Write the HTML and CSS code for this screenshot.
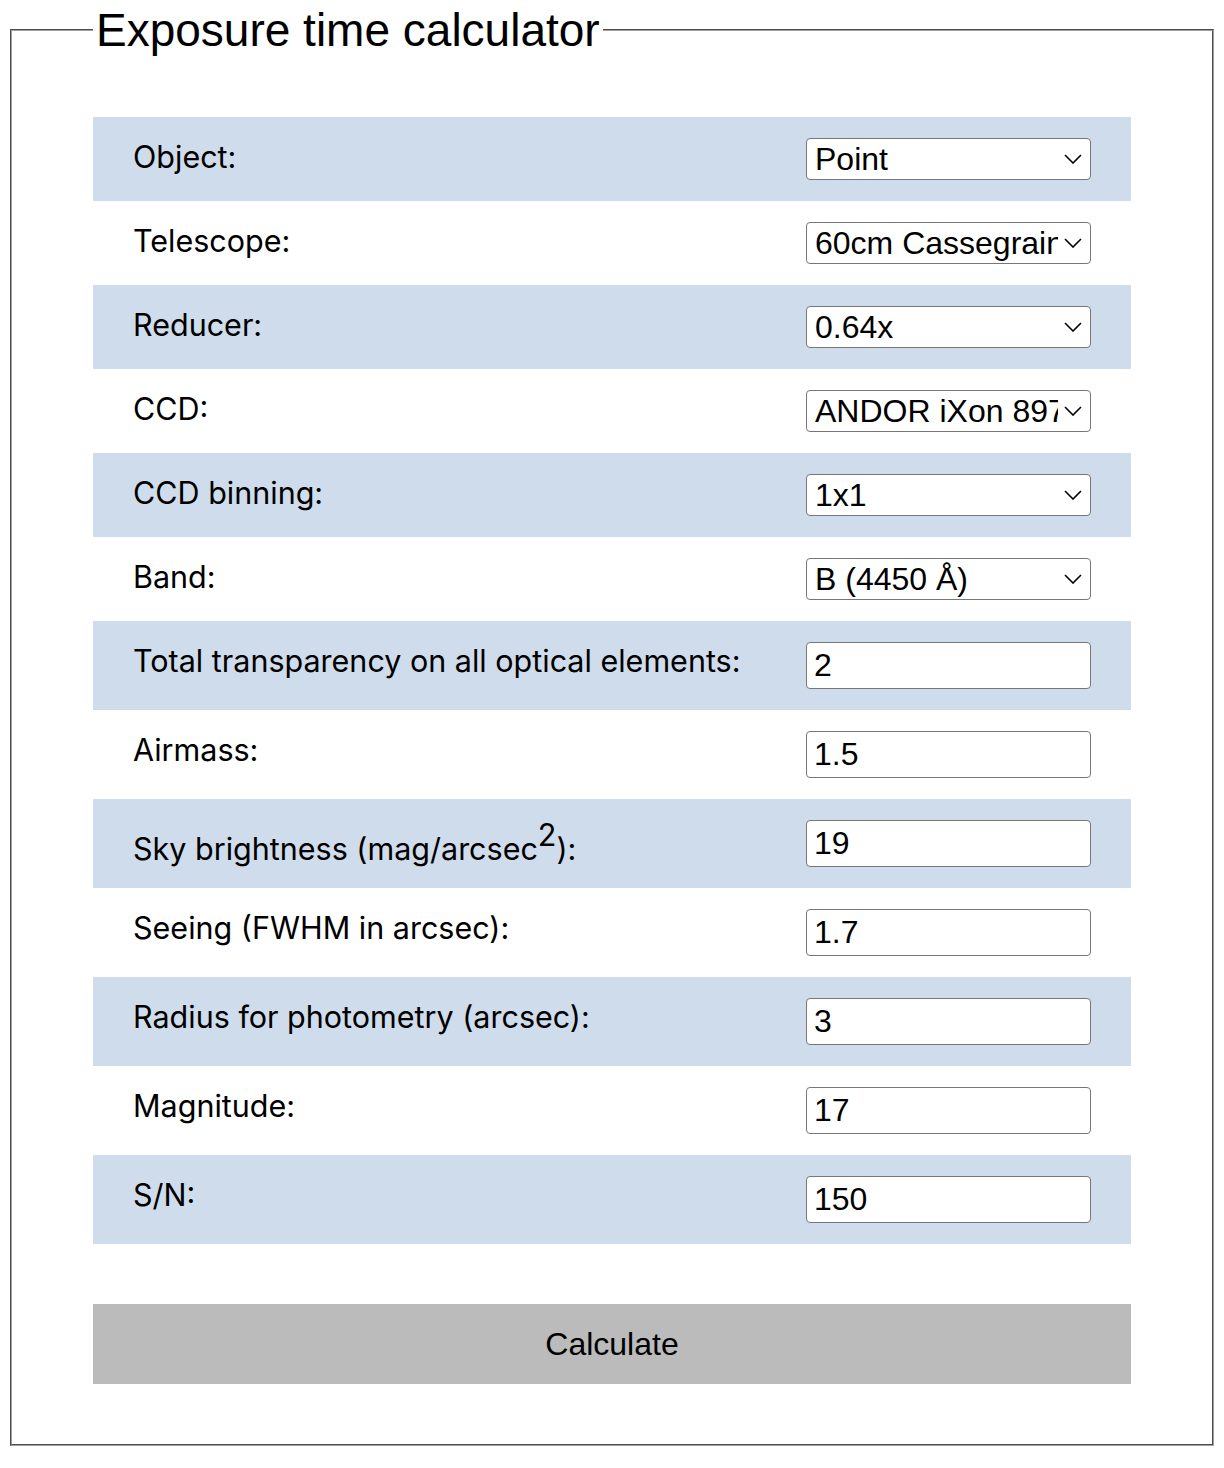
FILE: index.html
```html
<!DOCTYPE html>
<html lang="en">
<head>
<meta charset="utf-8">
<title>Exposure time calculator</title>
<link rel="stylesheet" href="styles.css">
</head>
<body>
<form class="calc">
  <fieldset class="box">
    <legend class="title">Exposure time calculator</legend>
    <table class="grid">
      <tr class="alt">
        <td class="lbl">Object:</td>
        <td class="ctl"><select class="sel"><option>Point</option><option>Extended</option></select></td>
      </tr>
      <tr>
        <td class="lbl">Telescope:</td>
        <td class="ctl"><select class="sel"><option>60cm Cassegrain</option></select></td>
      </tr>
      <tr class="alt">
        <td class="lbl">Reducer:</td>
        <td class="ctl"><select class="sel"><option>0.64x</option></select></td>
      </tr>
      <tr>
        <td class="lbl">CCD:</td>
        <td class="ctl"><select class="sel"><option>ANDOR iXon 897</option></select></td>
      </tr>
      <tr class="alt">
        <td class="lbl">CCD binning:</td>
        <td class="ctl"><select class="sel"><option>1x1</option></select></td>
      </tr>
      <tr>
        <td class="lbl">Band:</td>
        <td class="ctl"><select class="sel"><option>B (4450 Å)</option></select></td>
      </tr>
      <tr class="alt">
        <td class="lbl">Total transparency on all optical elements:</td>
        <td class="ctl"><input class="inp" type="text" value="2"></td>
      </tr>
      <tr>
        <td class="lbl">Airmass:</td>
        <td class="ctl"><input class="inp" type="text" value="1.5"></td>
      </tr>
      <tr class="alt">
        <td class="lbl">Sky brightness (mag/arcsec<sup class="sup">2</sup>):</td>
        <td class="ctl"><input class="inp" type="text" value="19"></td>
      </tr>
      <tr>
        <td class="lbl">Seeing (FWHM in arcsec):</td>
        <td class="ctl"><input class="inp" type="text" value="1.7"></td>
      </tr>
      <tr class="alt">
        <td class="lbl">Radius for photometry (arcsec):</td>
        <td class="ctl"><input class="inp" type="text" value="3"></td>
      </tr>
      <tr>
        <td class="lbl">Magnitude:</td>
        <td class="ctl"><input class="inp" type="text" value="17"></td>
      </tr>
      <tr class="alt">
        <td class="lbl">S/N:</td>
        <td class="ctl"><input class="inp" type="text" value="150"></td>
      </tr>
    </table>
    <button class="go" type="button">Calculate</button>
  </fieldset>
</form>
</body>
</html>
```

FILE: styles.css
```css
html, body {
  background: #ffffff;
}
body {
  margin: 3px 8px 8px 8px;
  font-family: "Liberation Sans", Arial, sans-serif;
  color: #000;
}
.calc {
  margin: 0;
}
.box {
  margin: 0 2px;
  padding: 60px 81px 60px 81px;
  border: 2px groove #a0a0a0;
  min-width: 0;
}
.title {
  font-family: "Liberation Sans", Arial, sans-serif;
  font-size: 46px;
  padding: 0 3px;
  margin-left: 0;
}
.grid {
  width: 100%;
  table-layout: fixed;
  border-collapse: collapse;
  border-spacing: 0;
}
.alt {
  background: #cfdceb;
}
.lbl {
  font-family: Inter, "Liberation Sans", sans-serif;
  font-size: 30.5px;
  white-space: nowrap;
  overflow: visible;
  vertical-align: top;
  padding: 21px 10px 21px 40px;
  line-height: normal;
}
.sup {
  font-size: 1em;
  line-height: 1;
  vertical-align: 14px;
}
.ctl {
  width: 285px;
  vertical-align: top;
  padding: 21px 40px 21px 40px;
}
.sel {
  -webkit-appearance: none;
  appearance: none;
  display: block;
  box-sizing: border-box;
  width: 285px;
  height: 42px;
  margin: 0;
  padding: 0 32px 0 8px;
  border: 1.5px solid #777;
  border-radius: 4px;
  background-color: #fff;
  background-image: url("data:image/svg+xml;utf8,<svg xmlns='http://www.w3.org/2000/svg' width='18' height='10' viewBox='0 0 18 10'><path d='M1 1 L9 9 L17 1' fill='none' stroke='black' stroke-width='1.6'/></svg>");
  background-repeat: no-repeat;
  background-position: right 8px center;
  font-family: "Liberation Sans", Arial, sans-serif;
  font-size: 32px;
  color: #000;
}
.inp {
  display: block;
  box-sizing: border-box;
  width: 285px;
  height: 47px;
  margin: 0;
  padding: 0 7px;
  border: 1.5px solid #777;
  border-radius: 4px;
  background: #fff;
  font-family: "Liberation Sans", Arial, sans-serif;
  font-size: 32px;
  color: #000;
}
.go {
  display: block;
  width: 100%;
  height: 80px;
  margin: 60px 0 0 0;
  border: none;
  background: #bbbbbb;
  font-family: "Liberation Sans", Arial, sans-serif;
  font-size: 32px;
  color: #000;
}
```
